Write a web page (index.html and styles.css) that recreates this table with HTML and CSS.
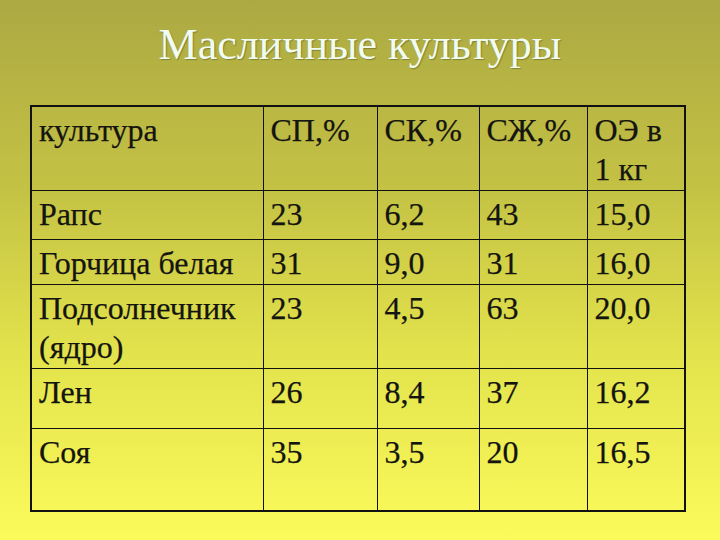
FILE: index.html
```html
<!DOCTYPE html>
<html>
<head>
<meta charset="utf-8">
<link rel="stylesheet" href="styles.css">
</head>
<body>
<div class="slide">
  <h1 class="title">Масличные культуры</h1>
  <table class="grid">
    <colgroup>
      <col class="c1"><col class="c2"><col class="c3"><col class="c4"><col class="c5">
    </colgroup>
    <tr class="r-head"><td>культура</td><td>СП,%</td><td>СК,%</td><td>СЖ,%</td><td>ОЭ в 1 кг</td></tr>
    <tr class="r-raps"><td>Рапс</td><td>23</td><td>6,2</td><td>43</td><td>15,0</td></tr>
    <tr class="r-gor"><td>Горчица белая</td><td>31</td><td>9,0</td><td>31</td><td>16,0</td></tr>
    <tr class="r-pod"><td>Подсолнечник (ядро)</td><td>23</td><td>4,5</td><td>63</td><td>20,0</td></tr>
    <tr class="r-len"><td>Лен</td><td>26</td><td>8,4</td><td>37</td><td>16,2</td></tr>
    <tr class="r-soy"><td>Соя</td><td>35</td><td>3,5</td><td>20</td><td>16,5</td></tr>
  </table>
</div>
</body>
</html>
```
FILE: styles.css
```css
html, body {
  margin: 0;
  padding: 0;
}
body {
  width: 720px;
  height: 540px;
  overflow: hidden;
  background: linear-gradient(to bottom, #aca943 0%, #c4c244 35%, #e2e24c 65%, #fbfb5c 100%);
  font-family: "Liberation Serif", Tinos, serif;
}
.slide {
  width: 720px;
  height: 540px;
  box-sizing: border-box;
}
.title {
  margin: 0;
  height: 105px;
  box-sizing: border-box;
  padding-top: 20px;
  font-family: "Liberation Serif", Tinos, serif;
  font-size: 44px;
  line-height: 50px;
  font-weight: normal;
  color: #f0fcf2;
  text-align: center;
  text-shadow: 1px 1px 1px rgba(60, 60, 20, 0.4);
}
.grid {
  margin-left: 30px;
  width: 656px;
  border-collapse: collapse;
  table-layout: fixed;
  border: 2px solid #111;
  color: #141410;
  font-family: "Liberation Serif", Tinos, serif;
  font-size: 32px;
  line-height: 39px;
  -webkit-text-stroke: 0.25px #141410;
}
.grid td {
  border: 1px solid #111;
  vertical-align: top;
  padding: 4px 4px 0 7px;
  box-sizing: border-box;
}
.c1 { width: 232px; }
.c2 { width: 114px; }
.c3 { width: 102px; }
.c4 { width: 108px; }
.c5 { width: 98px; }
.r-head td { height: 84px; }
.r-raps td { height: 49px; }
.r-gor td { height: 45px; }
.r-pod td { height: 84px; }
.r-len td { height: 60px; }
.r-soy td { height: 83px; }
```
